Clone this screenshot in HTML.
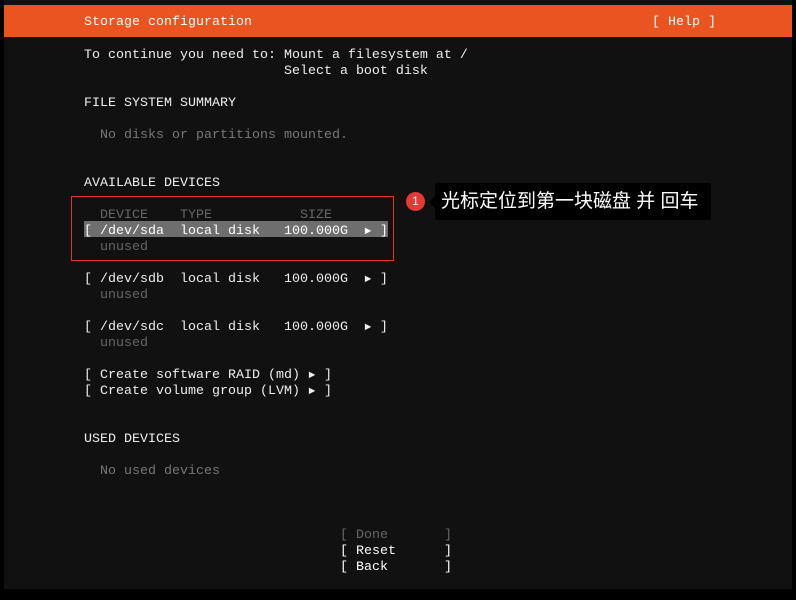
<!DOCTYPE html>
<html><head><meta charset="utf-8"><style>
body{margin:0;width:796px;height:600px;background:#000;overflow:hidden;position:relative;font-family:"Liberation Mono",monospace;}
#scr{position:absolute;left:4px;top:0;width:788px;height:589px;background:#111;}
#hdr{position:absolute;left:4px;top:5px;width:788px;height:32px;background:#e95420;}
.l{position:absolute;white-space:pre;font-size:13.33px;line-height:16px;height:16px;color:#eee;margin-top:2px;}
.g{color:#666;}
.d{color:#777;}
.a{display:inline-block;width:8px;font-size:11px;text-align:center;}
#hl{position:absolute;left:84px;top:221px;width:304px;height:16px;background:#6e6e6e;}
#box{position:absolute;left:71px;top:196px;width:321px;height:63px;border:1px solid #d33;}
#tip{position:absolute;left:435px;top:183px;width:276px;height:37px;background:#000;border-radius:2px;color:#fff;font-family:"Liberation Sans","Noto Sans CJK SC",sans-serif;font-size:19px;line-height:37px;padding-left:6px;box-sizing:border-box;}
#tip:before{content:"";position:absolute;left:-6px;top:13px;border:6px solid transparent;border-left:0;border-right-color:#000;}
#badge{position:absolute;left:406px;top:192px;width:19px;height:19px;border-radius:50%;background:#e53935;color:#fff;font-family:"Liberation Sans",sans-serif;font-size:12px;line-height:19px;text-align:center;}
</style></head><body>
<div id="scr"></div>
<div id="hdr"></div>
<div class="l" style="left:84px;top:13px;color:#fff">Storage configuration</div>
<div class="l" style="left:652px;top:13px;color:#fff">[ Help ]</div>
<div class="l" style="left:84px;top:46px">To continue you need to: Mount a filesystem at /</div>
<div class="l" style="left:84px;top:62px">                         Select a boot disk</div>
<div class="l" style="left:84px;top:94px">FILE SYSTEM SUMMARY</div>
<div class="l d" style="left:84px;top:126px">  No disks or partitions mounted.</div>
<div class="l" style="left:84px;top:174px">AVAILABLE DEVICES</div>
<div id="box"></div>
<div id="hl"></div>
<div class="l g" style="left:84px;top:206px">  DEVICE    TYPE           SIZE</div>
<div class="l" style="left:84px;top:222px;color:#fff">[ /dev/sda  local disk   100.000G  <span class="a">►</span> ]</div>
<div class="l g" style="left:84px;top:238px">  unused</div>
<div class="l" style="left:84px;top:270px">[ /dev/sdb  local disk   100.000G  <span class="a">►</span> ]</div>
<div class="l g" style="left:84px;top:286px">  unused</div>
<div class="l" style="left:84px;top:318px">[ /dev/sdc  local disk   100.000G  <span class="a">►</span> ]</div>
<div class="l g" style="left:84px;top:334px">  unused</div>
<div class="l" style="left:84px;top:366px">[ Create software RAID (md) <span class="a">►</span> ]</div>
<div class="l" style="left:84px;top:382px">[ Create volume group (LVM) <span class="a">►</span> ]</div>
<div class="l" style="left:84px;top:430px">USED DEVICES</div>
<div class="l d" style="left:84px;top:462px">  No used devices</div>
<div class="l g" style="left:340px;top:526px">[ Done       ]</div>
<div class="l" style="left:340px;top:542px;color:#fff">[ Reset      ]</div>
<div class="l" style="left:340px;top:558px;color:#fff">[ Back       ]</div>
<div id="badge">1</div>
<div id="tip">光标定位到第一块磁盘 并 回车</div>
</body></html>
